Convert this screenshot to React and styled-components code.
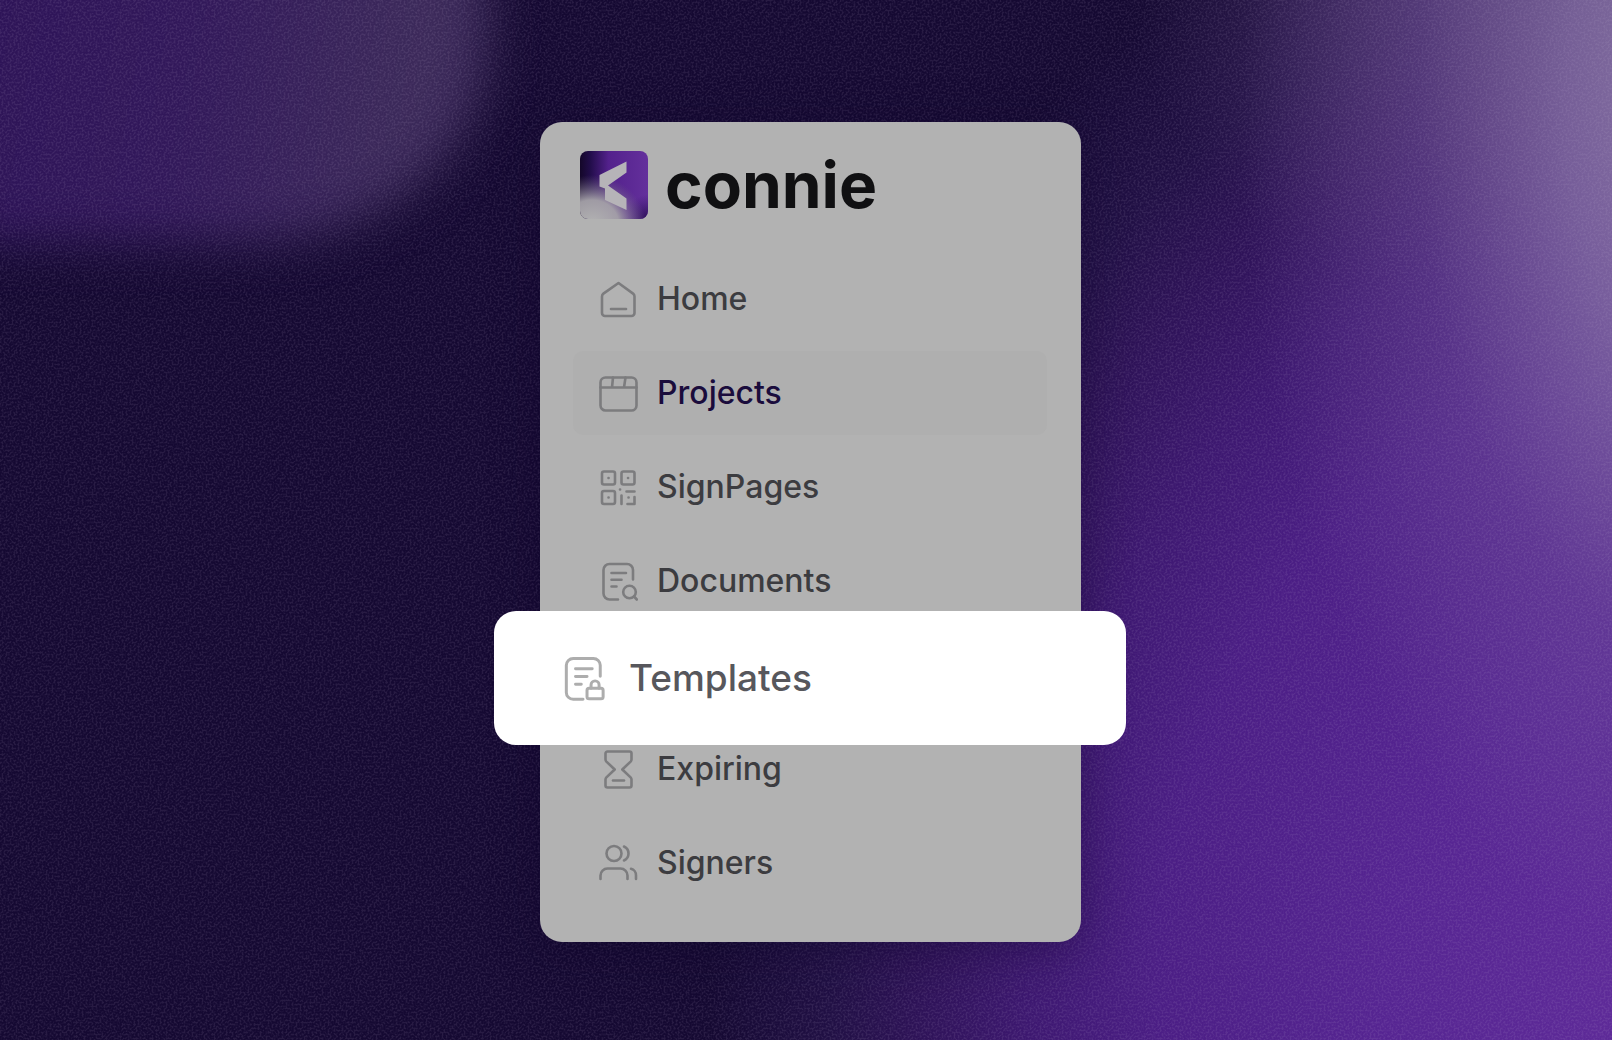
import styled, { createGlobalStyle, css } from "styled-components";

const GlobalStyle = createGlobalStyle`
  *,
  *::before,
  *::after {
    box-sizing: border-box;
  }

  body {
    margin: 0;
    background-color: #150932;
    font-family: Inter, "Liberation Sans", sans-serif;
  }
`;

const Stage = styled.main`
  position: relative;
  min-height: 100vh;
  display: flex;
  align-items: center;
  justify-content: center;
  padding: 24px 0 0 9px;
  overflow: hidden;
  background:
    radial-gradient(
      ellipse 31% 84% at 108% 10%,
      rgba(154, 138, 178, 0.9) 0%,
      rgba(136, 114, 168, 0.76) 35%,
      rgba(116, 84, 158, 0.4) 65%,
      rgba(96, 64, 140, 0) 100%
    ),
    radial-gradient(
      ellipse 20% 32% at 90% -4%,
      rgba(106, 78, 136, 0.45) 0%,
      rgba(90, 66, 116, 0) 100%
    ),
    radial-gradient(
      ellipse 58% 112% at 102% 96%,
      #5f2b99 0%,
      #562592 28%,
      #4b1e85 52%,
      #3d1870 66%,
      #2f1359 77%,
      #211045 87%,
      rgba(21, 9, 50, 0) 100%
    ),
    #150932;
`;

const CornerGlow = styled.div`
  position: absolute;
  top: -60px;
  left: -60px;
  width: 34%;
  height: 29%;
  border-radius: 0 0 240px 0 / 0 0 200px 0;
  background: linear-gradient(100deg, #2e1458 10%, #32185a 45%, #3c2a5a 82%);
  filter: blur(24px);
`;

const Grain = styled.svg`
  position: absolute;
  inset: 0;
  width: 100%;
  height: 100%;
  opacity: 0.1;
  pointer-events: none;
`;

const Panel = styled.aside`
  position: relative;
  width: 541px;
  padding: 29px 34px 37px 33px;
  border-radius: 22px;
  background-color: #b2b2b2;
  box-shadow: 0 8px 48px rgba(16, 6, 40, 0.4);
`;

const Brand = styled.a`
  display: flex;
  align-items: center;
  gap: 17px;
  height: 68px;
  margin: 0 0 38px 7px;
  color: #101012;
  text-decoration: none;
`;

const BrandMark = styled.svg`
  width: 68px;
  height: 68px;
  flex-shrink: 0;
`;

const BrandName = styled.span`
  font-size: 64px;
  font-weight: 700;
  line-height: 68px;
`;

const NavList = styled.ul`
  display: flex;
  flex-direction: column;
  gap: 10px;
  margin: 0;
  padding: 0;
  list-style: none;
`;

const NavIcon = styled.svg`
  width: 40px;
  height: 40px;
  flex-shrink: 0;
  fill: none;
  stroke: #7c7c7e;
  stroke-width: 2.6;
  stroke-linecap: round;
  stroke-linejoin: round;
`;

const NavLink = styled.a`
  display: flex;
  align-items: center;
  gap: 19px;
  height: 84px;
  padding: 0 25px;
  border-radius: 10px;
  color: #3c3c40;
  font-size: 32px;
  font-weight: 500;
  line-height: 40px;
  text-decoration: none;

  ${({ $active }) =>
    $active &&
    css`
      background-color: #afafaf;
      color: #1a0c3c;
    `}

  ${({ $spotlight }) =>
    $spotlight &&
    css`
      position: relative;
      gap: 23px;
      height: 134px;
      margin: -22px -79px -28px;
      padding: 0 66px;
      border-radius: 22px;
      background-color: #ffffff;
      color: #57575c;
      font-size: 37px;

      ${NavIcon} {
        width: 46px;
        height: 46px;
        stroke: #adadad;
      }
    `}
`;

const HomeIcon = () => (
  <NavIcon viewBox="0 0 40 40" aria-hidden="true">
    <path d="M4 17.5c0-1.2.5-2.2 1.4-2.9L20.5 4l14.6 10.6c.9.7 1.4 1.7 1.4 2.9V34a3 3 0 0 1-3 3H7a3 3 0 0 1-3-3z" />
    <path d="M13 30h15" />
  </NavIcon>
);

const ProjectsIcon = () => (
  <NavIcon viewBox="0 0 40 40" aria-hidden="true">
    <rect x="2.5" y="4.5" width="36" height="33" rx="5" />
    <path d="M2.5 14.5h36M15 4.5l-1 10M27.5 4.5l-1.5 10" />
  </NavIcon>
);

const SignPagesIcon = () => (
  <NavIcon viewBox="0 0 40 40" aria-hidden="true">
    <rect x="4" y="4.5" width="13" height="13" rx="2" />
    <rect x="23.5" y="4.5" width="13" height="13" rx="2" />
    <rect x="4" y="24" width="13" height="13" rx="2" />
    <path d="M10.5 11h.1M30 11h.1M10.5 30.5h.1M22 22.5h.1M30.5 30.5h.1" />
    <path d="M23.5 28.5v8.5M28.5 24.5h8M36.5 30v7h-7" />
  </NavIcon>
);

const PageLines = () => (
  <>
    <path d="M35 18.5V9a6 6 0 0 0-6-6H11.5a6 6 0 0 0-6 6v23.5a6 6 0 0 0 6 6H20" />
    <path d="M13.5 12H28M13.5 18.7h10M13.5 25.5h5" />
  </>
);

const DocumentsIcon = () => (
  <NavIcon viewBox="0 0 40 40" aria-hidden="true">
    <PageLines />
    <circle cx="31.5" cy="31" r="6.3" />
    <path d="M36 35.5l2.8 3" />
  </NavIcon>
);

const TemplatesIcon = () => (
  <NavIcon viewBox="0 0 40 40" aria-hidden="true">
    <PageLines />
    <rect x="23.5" y="29" width="14" height="9" rx="1.8" />
    <path d="M27 29v-3a3.5 3.5 0 0 1 7 0v3" />
  </NavIcon>
);

const ExpiringIcon = () => (
  <NavIcon viewBox="0 0 40 40" aria-hidden="true">
    <path d="M9.5 2.5h22a2 2 0 0 1 2 2v6c0 .8-.3 1.5-.9 2.1l-8.3 7.9 8.3 7.9c.6.6.9 1.3.9 2.1v6a2 2 0 0 1-2 2h-22a2 2 0 0 1-2-2v-6c0-.8.3-1.5.9-2.1l8.3-7.9-8.3-7.9c-.6-.6-.9-1.3-.9-2.1v-6a2 2 0 0 1 2-2z" />
    <path d="M15 31.5h11" />
  </NavIcon>
);

const SignersIcon = () => (
  <NavIcon viewBox="0 0 40 40" aria-hidden="true">
    <circle cx="16" cy="10.5" r="7.5" />
    <path d="M26 3.5a7.7 7.7 0 0 1 0 14" />
    <path d="M2.5 36v-3.500a7 7 0 0 1 7-7h13a7 7 0 0 1 7 7V36M33 25.8a6.600 6.600 0 0 1 5 6.700V36" />
  </NavIcon>
);

const NAV_ITEMS = [
  { label: "Home", Icon: HomeIcon },
  { label: "Projects", Icon: ProjectsIcon, active: true },
  { label: "SignPages", Icon: SignPagesIcon },
  { label: "Documents", Icon: DocumentsIcon },
  { label: "Templates", Icon: TemplatesIcon, spotlight: true },
  { label: "Expiring", Icon: ExpiringIcon },
  { label: "Signers", Icon: SignersIcon },
];

const Logo = () => (
  <BrandMark viewBox="0 0 68 68" aria-hidden="true">
    <defs>
      <linearGradient id="markBase" x1="0" y1="0" x2="1" y2="0">
        <stop offset="0" stopColor="#140729" />
        <stop offset="0.15" stopColor="#220d4a" />
        <stop offset="0.42" stopColor="#53218c" />
        <stop offset="1" stopColor="#64309c" />
      </linearGradient>
      <radialGradient
        id="markGlow"
        gradientUnits="userSpaceOnUse"
        gradientTransform="translate(12 74) scale(54 50)"
        cx="0"
        cy="0"
        r="1"
      >
        <stop offset="0" stopColor="#b4b4b4" />
        <stop offset="0.5" stopColor="#a5a2a8" stopOpacity="0.95" />
        <stop offset="1" stopColor="#6f6580" stopOpacity="0" />
      </radialGradient>
      <radialGradient id="markCorner" cx="1" cy="1" r="0.36">
        <stop offset="0" stopColor="#2a1052" />
        <stop offset="1" stopColor="#3a1670" stopOpacity="0" />
      </radialGradient>
    </defs>
    <rect width="68" height="68" rx="8" fill="url(#markBase)" />
    <rect width="68" height="68" rx="8" fill="url(#markCorner)" />
    <rect width="68" height="68" rx="8" fill="url(#markGlow)" />
    <path
      d="M46.5 10.5L19.5 24v11.5l5.5 2V49l21.5 10V47.5L28 34.5l18.5-13z"
      fill="#b6b4b8"
    />
  </BrandMark>
);

const App = () => {
  return (
    <>
      <GlobalStyle />
      <Stage>
        <CornerGlow />
        <Grain aria-hidden="true">
          <filter id="grain" x="0" y="0" width="100%" height="100%">
            <feTurbulence type="fractalNoise" baseFrequency="0.5" numOctaves="2" />
            <feColorMatrix values="0 0 0 0 0.6  0 0 0 0 0.5  0 0 0 0 0.7  5 0 0 0 -2.2" />
          </filter>
          <rect width="100%" height="100%" filter="url(#grain)" />
        </Grain>

        <Panel>
          <Brand href="#">
            <Logo />
            <BrandName>connie</BrandName>
          </Brand>

          <nav aria-label="Main">
            <NavList>
              {NAV_ITEMS.map(({ label, Icon, active, spotlight }) => (
                <li key={label}>
                  <NavLink href="#" $active={active} $spotlight={spotlight}>
                    <Icon />
                    {label}
                  </NavLink>
                </li>
              ))}
            </NavList>
          </nav>
        </Panel>
      </Stage>
    </>
  );
};

export default App;
